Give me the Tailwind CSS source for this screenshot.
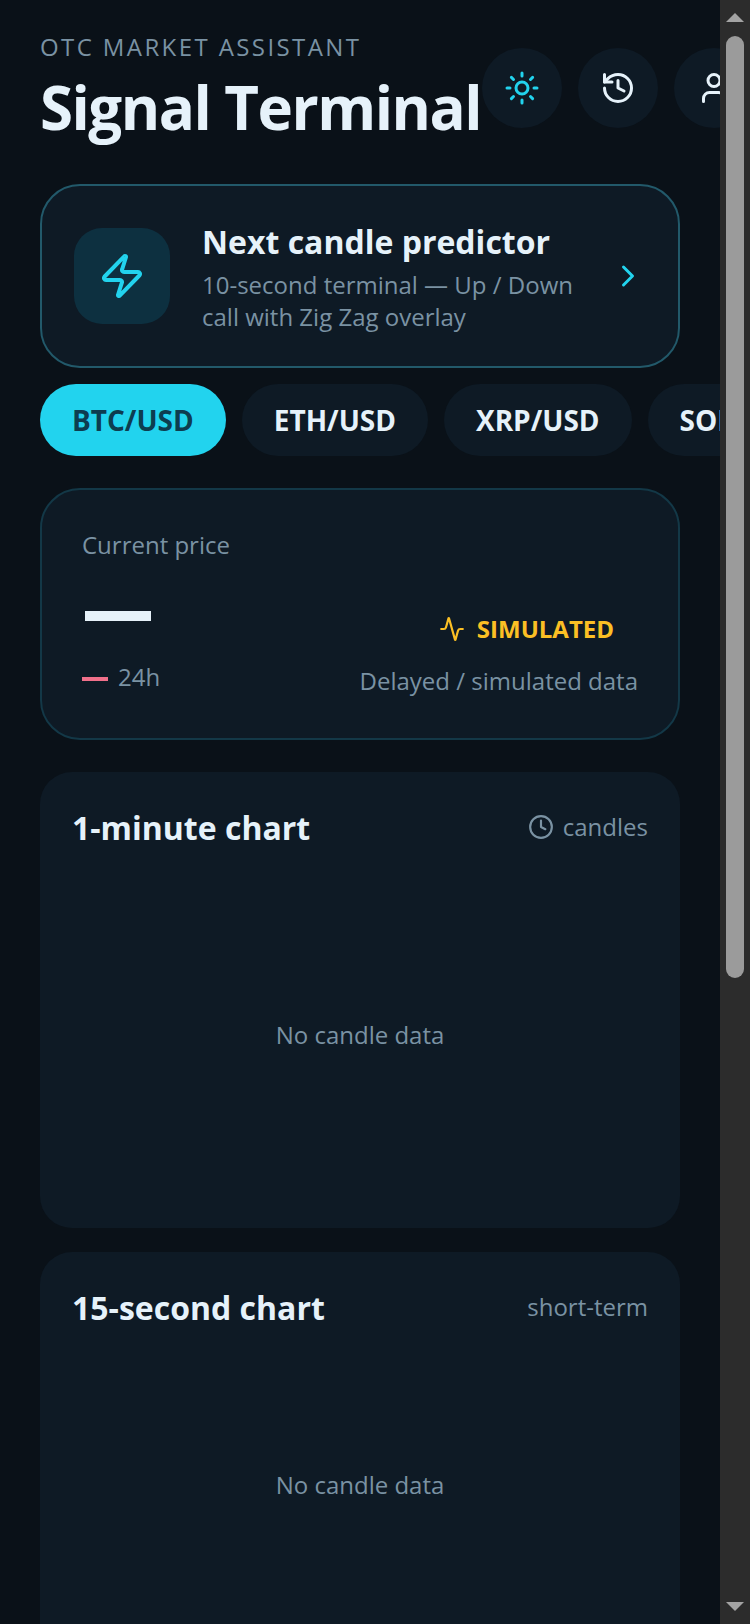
<!DOCTYPE html>
<html lang="en">
<head>
  <meta charset="UTF-8">
  <title>Signal Terminal</title>
  <script src="https://cdn.jsdelivr.net/npm/@tailwindcss/browser@4"></script>
</head>
<body class="bg-[#0a1118] font-['Open_Sans',sans-serif] overflow-hidden">
<div class="flex h-[1624px] w-[750px] overflow-hidden">

  <!-- Page content -->
  <main class="w-[720px] shrink-0 overflow-hidden bg-[#0a1118]">
    <div class="w-[720px] px-10 pt-[31px]">

      <!-- Header -->
      <header class="flex items-start gap-[2px] w-[800px]">
        <div class="w-[440px] shrink-0">
          <p class="text-[24px] leading-[32px] tracking-[2.4px] text-[#7a92a3]">OTC MARKET ASSISTANT</p>
          <h1 class="text-[60px] leading-[88px] font-bold tracking-tight text-[#e6f2fa] whitespace-nowrap">Signal Terminal</h1>
        </div>
        <div class="flex gap-4 mt-[17px]">
          <button class="w-20 h-20 rounded-full bg-[#0e1a25] flex items-center justify-center text-[#22d3ee]">
            <svg width="36" height="36" viewBox="0 0 24 24" fill="none" stroke="currentColor" stroke-width="2" stroke-linecap="round" stroke-linejoin="round"><circle cx="12" cy="12" r="4"/><path d="M12 2v2"/><path d="M12 20v2"/><path d="m4.93 4.93 1.41 1.41"/><path d="m17.66 17.66 1.41 1.41"/><path d="M2 12h2"/><path d="M20 12h2"/><path d="m6.34 17.66-1.41 1.41"/><path d="m19.07 4.93-1.41 1.41"/></svg>
          </button>
          <button class="w-20 h-20 rounded-full bg-[#0e1a25] flex items-center justify-center text-[#e6f2fa]">
            <svg width="36" height="36" viewBox="0 0 24 24" fill="none" stroke="currentColor" stroke-width="2" stroke-linecap="round" stroke-linejoin="round"><path d="M3 12a9 9 0 1 0 9-9 9.75 9.75 0 0 0-6.74 2.74L3 8"/><path d="M3 3v5h5"/><path d="M12 7v5l4 2"/></svg>
          </button>
          <button class="w-20 h-20 rounded-full bg-[#0e1a25] flex items-center justify-center text-[#e6f2fa]">
            <svg width="36" height="36" viewBox="0 0 24 24" fill="none" stroke="currentColor" stroke-width="2" stroke-linecap="round" stroke-linejoin="round"><path d="M19 21v-2a4 4 0 0 0-4-4H9a4 4 0 0 0-4 4v2"/><circle cx="12" cy="7" r="4"/></svg>
          </button>
        </div>
      </header>

      <!-- Predictor card -->
      <section class="mt-[33px] h-[184px] w-[640px] rounded-[40px] border-2 border-[#22596a] bg-[#0e1a25] flex items-center pl-[32px] pr-[32px]">
        <div class="w-24 h-24 rounded-[28px] bg-[#0d3040] flex items-center justify-center text-[#22d3ee] shrink-0">
          <svg width="48" height="48" viewBox="0 0 24 24" fill="none" stroke="currentColor" stroke-width="2" stroke-linecap="round" stroke-linejoin="round"><path d="M4 14a1 1 0 0 1-.78-1.63l9.9-10.2a.5.5 0 0 1 .86.46l-1.92 6.02A1 1 0 0 0 13 10h7a1 1 0 0 1 .78 1.63l-9.9 10.2a.5.5 0 0 1-.86-.46l1.92-6.02A1 1 0 0 0 11 14z"/></svg>
        </div>
        <div class="ml-8 flex-1 pt-[3px]">
          <h2 class="text-[32px] leading-[40px] font-bold text-[#e6f2fa]">Next candle predictor</h2>
          <p class="mt-[7px] text-[24px] leading-[32px] text-[#7a92a3]">10-second terminal — Up / Down<br>call with Zig Zag overlay</p>
        </div>
        <svg class="text-[#22d3ee] shrink-0" width="36" height="36" viewBox="0 0 24 24" fill="none" stroke="currentColor" stroke-width="2" stroke-linecap="round" stroke-linejoin="round"><path d="m9 18 6-6-6-6"/></svg>
      </section>

      <!-- Pair chips -->
      <div class="mt-[16px] flex gap-4 w-[800px]">
        <button class="h-[72px] px-8 rounded-full bg-[#22d3ee] text-[28px] font-bold text-[#0d3d50]">BTC/USD</button>
        <button class="h-[72px] px-8 rounded-full bg-[#0e1a25] text-[28px] font-bold text-[#e6f2fa]">ETH/USD</button>
        <button class="h-[72px] px-8 rounded-full bg-[#0e1a25] text-[28px] font-bold text-[#e6f2fa]">XRP/USD</button>
        <button class="h-[72px] px-8 rounded-full bg-[#0e1a25] text-[28px] font-bold text-[#e6f2fa] whitespace-nowrap">SOL/USD</button>
      </div>

      <!-- Current price -->
      <section class="mt-8 h-[252px] w-[640px] rounded-[40px] border-2 border-[#133847] bg-[#0e1a25] px-10 pt-[39px] flex justify-between">
        <div>
          <p class="text-[24px] leading-[32px] text-[#7a92a3]">Current price</p>
          <div class="mt-[50px] ml-[3px] w-[66px] h-[10px] bg-[#e6f2fa]"></div>
          <div class="mt-[40px] flex items-center gap-[10px]">
            <span class="w-[26px] h-[4px] mt-[4px] bg-[#f0708a]"></span>
            <span class="text-[24px] leading-[32px] text-[#7a92a3]">24h</span>
          </div>
        </div>
        <div class="flex flex-col items-end pt-[84px]">
          <div class="flex items-center gap-3 pr-6">
            <svg class="text-[#fbbf24]" width="26" height="26" viewBox="0 0 24 24" fill="none" stroke="currentColor" stroke-width="2" stroke-linecap="round" stroke-linejoin="round"><path d="M22 12h-2.48a2 2 0 0 0-1.93 1.46l-2.35 8.36a.25.25 0 0 1-.48 0L9.24 2.18a.25.25 0 0 0-.48 0l-2.35 8.36A2 2 0 0 1 4.49 12H2"/></svg>
            <span class="text-[24px] leading-[32px] font-bold text-[#fbbf24]">SIMULATED</span>
          </div>
          <p class="mt-[20px] text-[24px] leading-[32px] text-[#7a92a3]">Delayed / simulated data</p>
        </div>
      </section>

      <!-- 1-minute chart -->
      <section class="mt-8 h-[456px] w-[640px] rounded-[32px] bg-[#0e1a25] px-8 pt-9 pb-8 flex flex-col">
        <div class="flex justify-between items-center">
          <h3 class="text-[32px] leading-[40px] font-bold text-[#e6f2fa]">1-minute chart</h3>
          <span class="flex items-center gap-[9px] mb-[2px] text-[24px] leading-[32px] text-[#7a92a3]">
            <svg width="26" height="26" viewBox="0 0 24 24" fill="none" stroke="currentColor" stroke-width="2" stroke-linecap="round" stroke-linejoin="round"><circle cx="12" cy="12" r="10"/><path d="M12 6v6l4 2"/></svg>
            candles
          </span>
        </div>
        <div class="flex-1 pt-[25px] flex items-center justify-center text-[24px] text-[#7a92a3]">No candle data</div>
      </section>

      <!-- 15-second chart -->
      <section class="mt-6 h-[422px] w-[640px] rounded-[32px] bg-[#0e1a25] px-8 pt-9 pb-8 flex flex-col">
        <div class="flex justify-between items-center">
          <h3 class="text-[32px] leading-[40px] font-bold text-[#e6f2fa]">15-second chart</h3>
          <span class="mb-[2px] text-[24px] leading-[32px] text-[#7a92a3]">short-term</span>
        </div>
        <div class="flex-1 flex items-center justify-center text-[24px] text-[#7a92a3]">No candle data</div>
      </section>
    </div>
  </main>

  <!-- Scrollbar -->
  <aside class="w-[30px] shrink-0 h-full bg-[#2c2c2c] flex flex-col items-center">
    <div class="mt-[13px] w-0 h-0 border-x-[9px] border-x-transparent border-b-[9px] border-b-[#a3a3a3]"></div>
    <div class="mt-[14px] w-[18px] h-[942px] rounded-full bg-[#9b9b9b]"></div>
    <div class="mt-auto mb-[13px] w-0 h-0 border-x-[9px] border-x-transparent border-t-[9px] border-t-[#a3a3a3]"></div>
  </aside>
</div>
</body>
</html>
